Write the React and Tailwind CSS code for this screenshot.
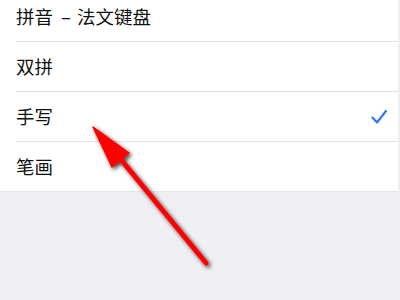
import React from "react";

const rows = [
  { label: "拼音 – 法文键盘", checked: false },
  { label: "双拼", checked: false },
  { label: "手写", checked: true },
  { label: "笔画", checked: false },
];

function Label({ text }) {
  if (text.includes("–")) {
    const [a, b] = text.split(" – ");
    return (
      <span className="flex-1 leading-none">
        {a}
        <span className="ml-[8px] mr-[6px]">–</span>
        {b}
      </span>
    );
  }
  return <span className="flex-1 leading-none">{text}</span>;
}

export default function App() {
  return (
    <div
      className="relative w-[400px] h-[300px] overflow-hidden bg-[#efeff4]"
      style={{ fontFamily: '"Noto Sans CJK SC", "Noto Sans", sans-serif' }}
    >
      <div className="mt-[-8px] mr-[2px] bg-white">
        {rows.map((r, i) => (
          <div key={i} className="pl-4">
            <div className="flex h-[49px] items-center pr-[10px] text-[18.5px] text-[#111]">
              <Label text={r.label} />
              {r.checked && (
                <svg width="18" height="18" viewBox="0 0 18 18" className="mt-[2px]">
                  <path
                    d="M2.5 8.5 L7 13.5 L16 2"
                    fill="none"
                    stroke="#3478f6"
                    strokeWidth="2.2"
                    strokeLinecap="round"
                    strokeLinejoin="round"
                  />
                </svg>
              )}
            </div>
            <div className={i === rows.length - 1 ? "h-px bg-[#e6e6ea] -ml-4" : "h-px bg-[#e2e2e6]"} />
          </div>
        ))}
      </div>
      <svg
        className="absolute left-0 top-0"
        width="400"
        height="300"
        viewBox="0 0 400 300"
      >
        <defs>
          <filter id="sh" x="-20%" y="-20%" width="140%" height="140%">
            <feGaussianBlur in="SourceAlpha" stdDeviation="2" />
            <feOffset dx="1.5" dy="2" result="b" />
            <feComponentTransfer>
              <feFuncA type="linear" slope="0.75" />
            </feComponentTransfer>
            <feMerge>
              <feMergeNode />
              <feMergeNode in="SourceGraphic" />
            </feMerge>
          </filter>
        </defs>
        <g filter="url(#sh)">
          <line
            x1="118"
            y1="156"
            x2="206"
            y2="263"
            stroke="#ff0000"
            strokeWidth="5"
            strokeLinecap="round"
          />
          <polygon points="93,127 129,153 112,167" fill="#ff0000" stroke="#ff0000" strokeWidth="1.5" strokeLinejoin="round" />
        </g>
      </svg>
    </div>
  );
}
